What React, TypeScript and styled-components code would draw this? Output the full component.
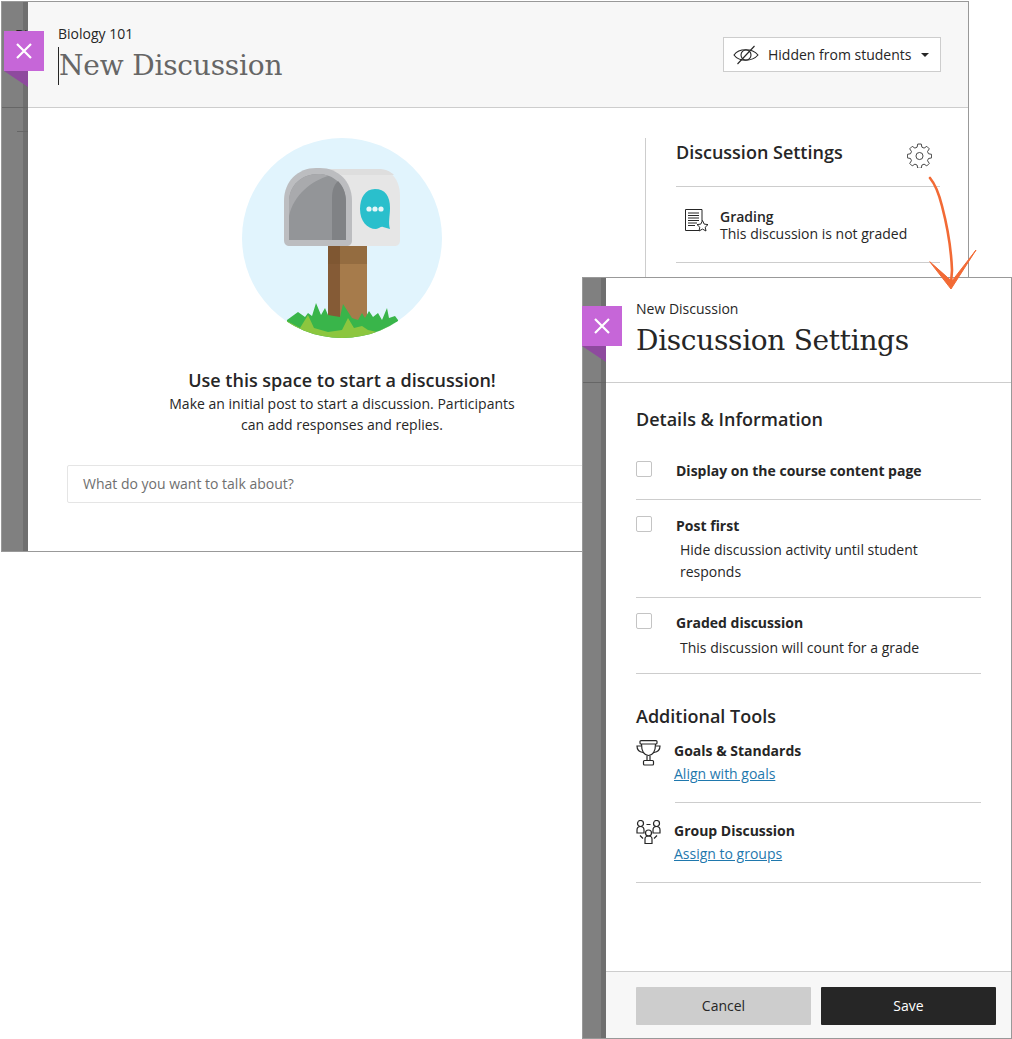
import React from "react";
import styled, { createGlobalStyle } from "styled-components";

const GlobalStyle = createGlobalStyle`
  html, body {
    margin: 0;
    padding: 0;
    background: #fff;
  }
  body {
    font-family: "Open Sans", "Liberation Sans", sans-serif;
    color: #262626;
  }
  * { box-sizing: border-box; }
`;

const Canvas = styled.div`
  position: relative;
  width: 1012px;
  height: 1039px;
  overflow: hidden;
`;

const Window = styled.section<{ $x: number; $y: number; $w: number; $h: number }>`
  position: absolute;
  left: ${(p) => p.$x}px;
  top: ${(p) => p.$y}px;
  width: ${(p) => p.$w}px;
  height: ${(p) => p.$h}px;
  display: flex;
  border: 1px solid #999;
  background: #fff;
`;

const Gutter = styled.div<{ $w: number }>`
  position: relative;
  overflow: hidden;
  flex: 0 0 ${(p) => p.$w}px;
  background: linear-gradient(to right, #808080 calc(100% - 5px), #6f6f6f calc(100% - 5px));
`;

const GutterLine = styled.div<{ $top: number; $left?: number }>`
  position: absolute;
  left: ${(p) => p.$left || 0}px;
  right: 0;
  top: ${(p) => p.$top}px;
  height: 1px;
  background: #666;
`;

const GutterText = styled.span`
  position: absolute;
  left: 13px;
  top: 23px;
  font-size: 14px;
  line-height: 19px;
  color: #262626;
`;

const CloseTab = styled.button<{ $x: number; $y: number }>`
  position: absolute;
  left: ${(p) => p.$x}px;
  top: ${(p) => p.$y}px;
  width: 40px;
  height: 40px;
  padding: 0;
  border: 0;
  background: #c666d8;
  display: flex;
  align-items: center;
  justify-content: center;
`;

const TabFold = styled.div<{ $x: number; $y: number; $w: number }>`
  position: absolute;
  left: ${(p) => p.$x}px;
  top: ${(p) => p.$y}px;
  width: ${(p) => p.$w}px;
  height: 16px;
  background: #8e4a9e;
  clip-path: polygon(0 0, 100% 0, 100% 100%);
`;

const Main = styled.div`
  flex: 1;
  min-width: 0;
  display: flex;
  flex-direction: column;
`;

const Header = styled.header`
  height: 106px;
  flex: none;
  background: #f7f7f7;
  border-bottom: 1px solid #cdcdcd;
  padding: 22px 27px 0 30px;
  display: flex;
  justify-content: space-between;
  align-items: flex-start;
`;

const Overline = styled.div`
  font-size: 14px;
  line-height: 19px;
  color: #262626;
`;

const PageTitle = styled.h1`
  margin: 4px 0 0;
  height: 38px;
  font-family: "DejaVu Serif", serif;
  font-weight: 400;
  font-size: 28px;
  line-height: 38px;
  letter-spacing: -0.2px;
  color: #666;
  border-left: 1px solid #262626;
  width: fit-content;
`;

const VisibilityButton = styled.button`
  margin-top: 13px;
  width: 218px;
  height: 35px;
  background: #fff;
  border: 1px solid #cdcdcd;
  display: flex;
  align-items: center;
  padding: 0 0 0 9px;
  font-family: inherit;
  font-size: 14px;
  color: #262626;
`;

const VisibilityLabel = styled.span`
  margin-left: 9px;
`;

const Caret = styled.span`
  margin-left: 10px;
  width: 0;
  height: 0;
  border-left: 4px solid transparent;
  border-right: 4px solid transparent;
  border-top: 4px solid #262626;
`;

const Body = styled.div`
  flex: 1;
  display: flex;
  padding-top: 30px;
`;

const Starter = styled.div`
  flex: 0 0 617px;
  padding-left: 11px;
  display: flex;
  flex-direction: column;
  align-items: center;
  position: relative;
`;

const Illustration = styled.svg`
  display: block;
`;

const StarterTitle = styled.h2`
  margin: 30px 0 0;
  font-size: 18px;
  line-height: 24px;
  font-weight: 600;
  color: #262626;
`;

const StarterText = styled.p`
  margin: 1px 0 0;
  width: 370px;
  font-size: 14px;
  line-height: 21px;
  text-align: center;
  color: #262626;
`;

const FakeInput = styled.div`
  margin: 30px 0 0 28px;
  align-self: flex-start;
  width: 560px;
  height: 38px;
  border: 1px solid #e5e5e5;
  border-radius: 2px;
  padding: 0 15px 2px;
  display: flex;
  align-items: center;
  font-size: 14px;
  color: #6f6f6f;
`;

const SidePanel = styled.aside`
  flex: 1;
  border-left: 1px solid #cdcdcd;
  padding: 0 28px 0 30px;
`;

const SideTop = styled.div`
  height: 49px;
  display: flex;
  justify-content: space-between;
  border-bottom: 1px solid #cdcdcd;
`;

const SectionTitle = styled.h3<{ $mt?: number }>`
  margin: ${(p) => p.$mt || 0}px 0 0;
  font-size: 18px;
  line-height: 28px;
  font-weight: 600;
  color: #262626;
`;

const GearBox = styled.span`
  margin: 5px 8px 0 0;
  display: block;
  height: 25px;
`;

const GradingRow = styled.div`
  height: 76px;
  border-bottom: 1px solid #cdcdcd;
  display: flex;
  align-items: flex-start;
  padding: 21px 0 0 8px;
  gap: 11px;
`;

const RowTitle = styled.div`
  font-size: 14px;
  line-height: 17px;
  font-weight: 600;
  color: #262626;
`;

const RowText = styled.div`
  font-size: 14px;
  line-height: 17px;
  color: #262626;
`;

const DrawerHeader = styled.header`
  height: 105px;
  flex: none;
  border-bottom: 1px solid #cdcdcd;
  padding: 21px 30px 0;
`;

const DrawerTitle = styled.h1`
  margin: 4px 0 0;
  font-family: "DejaVu Serif", serif;
  font-weight: 400;
  font-size: 28px;
  line-height: 38px;
  letter-spacing: -0.3px;
  color: #262626;
`;

const DrawerBody = styled.div`
  flex: 1;
  padding: 22px 30px 0;
`;

const CheckRow = styled.div<{ $h: number; $pt?: number; $mt?: number }>`
  height: ${(p) => p.$h}px;
  margin-top: ${(p) => p.$mt || 0}px;
  padding-top: ${(p) => p.$pt || 0}px;
  display: flex;
  gap: 24px;
  border-bottom: 1px solid #cdcdcd;
`;

const CheckBox = styled.span`
  flex: none;
  width: 16px;
  height: 16px;
  border: 1px solid #c4c4c4;
  border-radius: 2px;
  background: #fff;
`;

const CheckLabel = styled.div<{ $gap?: number }>`
  font-size: 14px;
  line-height: 19px;
  font-weight: 700;
  color: #262626;
  margin-bottom: ${(p) => p.$gap || 0}px;
`;

const CheckHelp = styled.div`
  font-size: 14px;
  line-height: 22px;
  margin-left: 4px;
  color: #262626;
`;

const ToolRow = styled.div<{ $h: number; $inset?: number; $pt?: number; $mt?: number }>`
  position: relative;
  height: ${(p) => p.$h}px;
  margin-top: ${(p) => p.$mt || 0}px;
  padding-top: ${(p) => p.$pt || 0}px;
  display: flex;
  gap: 13px;
  &::after {
    content: "";
    position: absolute;
    left: ${(p) => p.$inset || 0}px;
    right: 0;
    bottom: 0;
    height: 1px;
    background: #cdcdcd;
  }
`;

const ToolTitle = styled(RowTitle)`
  font-weight: 700;
`;

const ToolIcon = styled.svg`
  flex: none;
  margin-top: -2px;
`;

const ToolLink = styled.a`
  display: block;
  margin-top: 5px;
  font-size: 14px;
  line-height: 19px;
  color: #1f78ad;
  text-decoration: underline;
`;

const Footer = styled.footer`
  height: 67px;
  flex: none;
  background: #f7f7f7;
  border-top: 1px solid #cdcdcd;
  padding: 15px 15px 0 30px;
  display: flex;
  gap: 10px;
`;

const FooterButton = styled.button<{ $primary?: boolean }>`
  height: 38px;
  width: 175px;
  border: 0;
  border-radius: 1px;
  padding: 0 0 2px;
  font-family: inherit;
  font-size: 14px;
  background: ${(p) => (p.$primary ? "#262626" : "#cdcdcd")};
  color: ${(p) => (p.$primary ? "#fff" : "#262626")};
`;

const ArrowOverlay = styled.svg`
  position: absolute;
  left: 920px;
  top: 170px;
`;

const CloseIcon = () => (
  <svg width="18" height="18" viewBox="0 0 18 18">
    <path d="M2 2 L16 16 M16 2 L2 16" stroke="#fff" strokeWidth="2.2" fill="none" />
  </svg>
);

const HiddenEye = () => (
  <svg width="26" height="20" viewBox="0 0 26 20" fill="none" stroke="#262626" strokeWidth="1.1">
    <path d="M1 10 C6 3 19 3 25 10 C19 17 6 17 1 10 Z" />
    <circle cx="13" cy="10" r="5" />
    <path d="M21.500 1 L4.500 19" />
  </svg>
);

const Gear = () => (
  <svg width="25" height="25" viewBox="0 0 24 24" fill="none" stroke="#3c3c3c" strokeWidth="0.9" strokeLinejoin="round">
    <path d="M10.3 1h3.4l.6 3 2.1.9 2.6-1.700 2.400 2.400-1.700 2.600.9 2.100 3 .6v3.400l-3 .6-.9 2.100 1.700 2.600-2.400 2.400-2.600-1.700-2.100.9-.6 3h-3.400l-.6-3-2.100-.9-2.600 1.700-2.400-2.400 1.700-2.600-.9-2.100-3-.6v-3.400l3-.6.9-2.100-1.700-2.600 2.400-2.400 2.600 1.700 2.100-.9z" />
    <circle cx="12" cy="12.500" r="3.400" />
  </svg>
);

const GradingIcon = () => (
  <svg width="25" height="25" viewBox="0 0 25 25" fill="none" stroke="#262626" strokeWidth="1" style={{ flex: "none" }}>
    <path d="M15 22.500 H1.500 V1.500 H18 V13" />
    <path d="M4 5 H15 M4 7.500 H15 M4 10 H15 M4 12.500 H15 M4 15 H13 M4 17.500 H11" />
    <path d="M18.500 12.500 l1.700 3.600 3.800.5 -2.800 2.600 .8 3.800 -3.500-1.900 -3.500 1.900 .8-3.800 -2.800-2.600 3.800-.5 z" fill="#fff" />
  </svg>
);

const TrophyIcon = () => (
  <ToolIcon width="25" height="26" viewBox="0 0 25 26" fill="none" stroke="#262626" strokeWidth="1.200">
    <rect x="4" y="0.600" width="17" height="3.400" rx="1" />
    <path d="M5.500 4 C5.500 11 7.500 15 12.500 15.500 C17.500 15 19.500 11 19.500 4" />
    <path d="M5 6 H1 C1 10 3 12 7 12.500 M20 6 H24 C24 10 22 12 18 12.500" />
    <path d="M11 15.500 V20.500 M14 15.500 V20.500" />
    <rect x="7.500" y="20.500" width="10" height="4.500" rx="1" />
  </ToolIcon>
);

const GroupIcon = () => (
  <ToolIcon width="25" height="25" viewBox="0 0 25 25" fill="none" stroke="#262626" strokeWidth="1.200">
    <circle cx="4.500" cy="3.500" r="3" />
    <circle cx="20.500" cy="3.500" r="3" />
    <circle cx="12.500" cy="13" r="3" />
    <path d="M1 13 V10 C1 8 2.500 6.500 4.500 6.500 C6.500 6.500 8 8 8 10 V13 Z" />
    <path d="M17 13 V10 C17 8 18.500 6.500 20.500 6.500 C22.500 6.500 24 8 24 10 V13 Z" />
    <path d="M9 23.500 V19 C9 17 10.500 16 12.500 16 C14.500 16 16 17 16 19 V23.500 Z" />
    <path d="M10.500 4.500 H14.500 M4 15.500 L7 18.500 M21 15.500 L18 18.500" />
  </ToolIcon>
);

const MailboxArt = () => (
  <Illustration width="200" height="200" viewBox="0 0 200 200">
    <defs>
      <clipPath id="disc">
        <circle cx="100" cy="100" r="100" />
      </clipPath>
    </defs>
    <circle cx="100" cy="100" r="100" fill="#e1f4fd" />
    <g clipPath="url(#disc)">
      <rect x="86" y="108" width="39" height="76" fill="#a67b4b" />
      <rect x="86" y="108" width="12" height="76" fill="#855b36" />
      <rect x="98" y="108" width="27" height="18" fill="#946c40" />
      <rect x="86" y="108" width="12" height="18" fill="#7f5732" />
      <path d="M78 31 H136 C150 31 158 43 158 58 V102 C158 106 156 108 152 108 H78 Z" fill="#e6e6e6" />
      <path d="M88 31 H136 C143 31 148 33 152 37 H100 Z" fill="#dedede" />
      <path d="M42 102 V63 C42 43 56 30 74 30 H78 C96 30 110 43 110 63 V102 C110 106 108 108 104 108 H48 C44 108 42 106 42 102 Z" fill="#bcbdc0" />
      <path d="M47 102 V64 C47 47 60 36 76 36 C92 36 104 47 104 64 V102 Z" fill="#939598" />
      <path d="M47 64 C47 47 60 36 76 36 C80 36 83 36.500 86 38 C70 43 52 56 47 78 Z" fill="#a9aaad" />
      <path d="M90 102 V60 C90 52 92 47 96 43 C101 48 104 55 104 64 V102 Z" fill="#808285" />
      <path d="M148 70 C148 58 143 51 133 51 C123 51 118 60 118 71 C118 83 125 91 134 91 C137 91 139 88 141 89 L148 91 C146 84 148 78 148 70 Z" fill="#2abfcc" />
      <circle cx="127" cy="71" r="2.600" fill="#e6f6f8" />
      <circle cx="133" cy="71" r="2.600" fill="#e6f6f8" />
      <circle cx="139" cy="71" r="2.600" fill="#e6f6f8" />
      <path d="M45 182 L56 174 L63 179 L66 175 L70 178 L74 165 L79 177 L83 170 L86 177 L98 179 L101 166 L110 180 L116 182 L120 175 L123 180 L127 173 L131 179 L136 175 L140 182 L145 170 L147 180 L153 178 L156 182 V200 H45 Z" fill="#39b54a" />
      <path d="M45 183 L58 190 L66 177 L72 190 L86 194 L100 192 L106 180 L112 190 L120 188 L126 192 L135 194 L156 184 V200 H45 Z" fill="#8cc63f" />
    </g>
  </Illustration>
);

const App = () => {
  return (
    <>
      <GlobalStyle />
      <Canvas>
        <Window $x={1} $y={1} $w={968} $h={551}>
          <Gutter $w={26}>
            <GutterText>Bi</GutterText>
            <GutterLine $top={105} />
            <GutterLine $top={129} $left={15} />
          </Gutter>
          <Main>
            <Header>
              <div>
                <Overline>Biology 101</Overline>
                <PageTitle>New Discussion</PageTitle>
              </div>
              <VisibilityButton>
                <HiddenEye />
                <VisibilityLabel>Hidden from students</VisibilityLabel>
                <Caret />
              </VisibilityButton>
            </Header>
            <Body>
              <Starter>
                <MailboxArt />
                <StarterTitle>Use this space to start a discussion!</StarterTitle>
                <StarterText>
                  Make an initial post to start a discussion. Participants can add responses and replies.
                </StarterText>
                <FakeInput>What do you want to talk about?</FakeInput>
              </Starter>
              <SidePanel>
                <SideTop>
                  <SectionTitle>Discussion Settings</SectionTitle>
                  <GearBox>
                    <Gear />
                  </GearBox>
                </SideTop>
                <GradingRow>
                  <GradingIcon />
                  <div>
                    <RowTitle>Grading</RowTitle>
                    <RowText>This discussion is not graded</RowText>
                  </div>
                </GradingRow>
              </SidePanel>
            </Body>
          </Main>
        </Window>
        <CloseTab $x={4} $y={31} aria-label="Close">
          <CloseIcon />
        </CloseTab>
        <TabFold $x={4} $y={71} $w={24} />

        <Window $x={582} $y={277} $w={430} $h={762}>
          <Gutter $w={23}>
            <GutterLine $top={104} />
          </Gutter>
          <Main>
            <DrawerHeader>
              <Overline>New Discussion</Overline>
              <DrawerTitle>Discussion Settings</DrawerTitle>
            </DrawerHeader>
            <DrawerBody>
              <SectionTitle>Details &amp; Information</SectionTitle>
              <CheckRow $h={39} $mt={28}>
                <CheckBox />
                <div>
                  <CheckLabel>Display on the course content page</CheckLabel>
                </div>
              </CheckRow>
              <CheckRow $h={98} $pt={16}>
                <CheckBox />
                <div>
                  <CheckLabel $gap={4}>Post first</CheckLabel>
                  <CheckHelp>Hide discussion activity until student responds</CheckHelp>
                </div>
              </CheckRow>
              <CheckRow $h={76} $pt={15}>
                <CheckBox />
                <div>
                  <CheckLabel $gap={5}>Graded discussion</CheckLabel>
                  <CheckHelp>This discussion will count for a grade</CheckHelp>
                </div>
              </CheckRow>
              <SectionTitle $mt={28}>Additional Tools</SectionTitle>
              <ToolRow $h={61} $inset={39} $mt={12}>
                <TrophyIcon />
                <div>
                  <ToolTitle>Goals &amp; Standards</ToolTitle>
                  <ToolLink>Align with goals</ToolLink>
                </div>
              </ToolRow>
              <ToolRow $h={80} $pt={19}>
                <GroupIcon />
                <div>
                  <ToolTitle>Group Discussion</ToolTitle>
                  <ToolLink>Assign to groups</ToolLink>
                </div>
              </ToolRow>
            </DrawerBody>
            <Footer>
              <FooterButton>Cancel</FooterButton>
              <FooterButton $primary>Save</FooterButton>
            </Footer>
          </Main>
        </Window>
        <CloseTab $x={582} $y={306} aria-label="Close settings">
          <CloseIcon />
        </CloseTab>
        <TabFold $x={582} $y={346} $w={24} />

        <ArrowOverlay width="70" height="130" viewBox="0 0 70 130" fill="none" stroke="#f26a35" strokeLinecap="round">
          <path d="M10 8 C15 14 19 24 22 36 C27 55 31 75 32 100 L31 114" strokeWidth="2.600" />
          <path d="M10 92 L31 119 L56 80 L32 111 Z" fill="#f26a35" strokeWidth="1" strokeLinejoin="round" />
        </ArrowOverlay>
      </Canvas>
    </>
  );
};

export default App;
